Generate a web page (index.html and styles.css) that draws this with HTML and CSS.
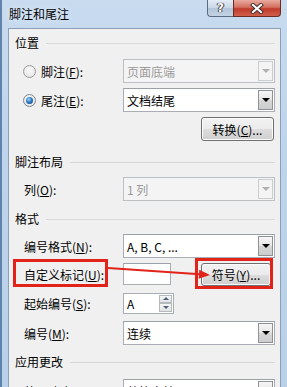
FILE: index.html
```html
<!DOCTYPE html>
<html lang="zh-CN">
<head>
<meta charset="UTF-8">
<title>脚注和尾注</title>
<link rel="stylesheet" href="styles.css">
</head>
<body>
<div class="window">
  <div class="titlebar">
    <span class="title">脚注和尾注</span>
    <div class="caption">
      <span class="cap-btn help">?</span>
      <span class="cap-btn close">
        <svg width="14" height="11" viewBox="0 0 14 11">
          <path d="M3 2 L11 9 M11 2 L3 9" stroke="#3a2a2a" stroke-width="4" stroke-linecap="square"/>
          <path d="M3 2 L11 9 M11 2 L3 9" stroke="#fff" stroke-width="2.2" stroke-linecap="square"/>
        </svg>
      </span>
    </div>
  </div>

  <div class="client">
    <div class="group-head">位置</div>

    <div class="row r-foot">
      <label class="lbl radio-lbl"><span class="radio"></span><span>脚注(<u>F</u>):</span></label>
      <div class="combo disabled"><span class="combo-text">页面底端</span><span class="drop"></span></div>
    </div>
    <div class="row r-end">
      <label class="lbl radio-lbl"><span class="radio checked"></span><span>尾注(<u>E</u>):</span></label>
      <div class="combo"><span class="combo-text">文档结尾</span><span class="drop"></span></div>
    </div>
    <div class="row r-convert">
      <button class="btn btn-convert">转换(<u>C</u>)...</button>
    </div>

    <div class="group-head gh-layout">脚注布局</div>
    <div class="row r-cols">
      <label class="lbl">列(<u>O</u>):</label>
      <div class="combo disabled"><span class="combo-text">1 列</span><span class="drop"></span></div>
    </div>

    <div class="group-head gh-format">格式</div>
    <div class="row r-numfmt">
      <label class="lbl">编号格式(<u>N</u>):</label>
      <div class="combo"><span class="combo-text">A, B, C, ...</span><span class="drop"></span></div>
    </div>
    <div class="row r-custom">
      <label class="lbl">自定义标记(<u>U</u>):</label>
      <div class="textbox"></div>
      <button class="btn btn-symbol">符号(<u>Y</u>)...</button>
    </div>
    <div class="row r-start">
      <label class="lbl">起始编号(<u>S</u>):</label>
      <div class="spin">
        <span class="spin-text">A</span>
        <span class="spin-btns"><span class="spin-up"></span><span class="spin-down"></span></span>
      </div>
    </div>
    <div class="row r-numbering">
      <label class="lbl">编号(<u>M</u>):</label>
      <div class="combo"><span class="combo-text">连续</span><span class="drop"></span></div>
    </div>

    <div class="group-head gh-apply">应用更改</div>
    <div class="row r-apply">
      <label class="lbl">将更改应用于(<u>P</u>):</label>
      <div class="combo"><span class="combo-text">整篇文档</span><span class="drop"></span></div>
    </div>
  </div>

  <!-- 标注层：红框和箭头 -->
  <svg class="marks" width="287" height="387" viewBox="0 0 287 387">
    <rect x="14.5" y="260.5" width="92" height="25" fill="none" stroke="#e2231a" stroke-width="3"/>
    <rect x="196.5" y="259.5" width="75" height="28" fill="none" stroke="#e2231a" stroke-width="3"/>
    <line x1="108" y1="268" x2="200" y2="274.3" stroke="#e2231a" stroke-width="2"/>
    <polygon points="210,275 199.3,269.8 198.7,278.7" fill="#e2231a"/>
  </svg>
</div>
</body>
</html>
```

FILE: styles.css
```css
* {
  box-sizing: border-box;
}
body {
  margin: 0;
  font-family: "Noto Sans CJK SC", "Microsoft YaHei", sans-serif;
  font-size: 12px;
  color: #000;
}
u {
  text-decoration: underline;
  text-underline-offset: 1px;
}

.window {
  position: relative;
  width: 287px;
  height: 387px;
  overflow: hidden;
  background: linear-gradient(to bottom, #c8dbef 0%, #bed4ec 40%, #b8d0e9 100%);
  border-left: 2px solid #5f83aa;
}

/* titellinje */
.titlebar {
  height: 28px;
  display: flex;
  justify-content: space-between;
  align-items: flex-start;
  padding-left: 7px;
}
.title {
  line-height: 28px;
  text-shadow: 0 0 6px #eaf2fb;
}
.caption {
  display: flex;
  margin-right: 6px;
}
.cap-btn {
  height: 17px;
  display: flex;
  align-items: center;
  justify-content: center;
  border: 1px solid #5a6b82;
  border-top: none;
}
.help {
  width: 26px;
  border-right: none;
  border-bottom-left-radius: 4px;
  background: linear-gradient(to bottom, #e3ebf5 0%, #c9d6e6 50%, #b3c3d8 51%, #c4d3e4 100%);
  color: #fff;
  font-family: "DejaVu Sans", sans-serif;
  font-weight: bold;
  font-size: 12px;
  text-shadow: 0 0 1px #333, 0 0 1px #333, 1px 0 0 #4a4a4a, -1px 0 0 #4a4a4a;
}
.close {
  width: 48px;
  border-bottom-right-radius: 4px;
  border-color: #6b2a24;
  background: linear-gradient(to bottom, #e8aa9f 0%, #d4705f 45%, #c0392a 55%, #d0604c 100%);
}

/* klientområde */
.client {
  height: 359px;
  margin: 0 6px;
  padding: 6px 5px 0 6px;
  background: #f0f0f0;
  border: 1px solid #8d9fb6;
  border-bottom: none;
}
.group-head {
  display: flex;
  align-items: center;
  height: 16px;
  line-height: 16px;
}
.group-head::after {
  content: "";
  flex: 1;
  margin-left: 7px;
  border-top: 1px solid #d9d9d9;
}
.gh-layout { margin-top: 13px; }
.gh-format { margin-top: 10px; }
.gh-apply { margin-top: 9px; }

.row {
  display: flex;
  align-items: center;
  height: 24px;
}
.r-foot { margin-top: 8px; }
.r-end { margin-top: 5px; }
.r-convert { margin-top: 5px; justify-content: flex-end; }
.r-cols { margin-top: 7px; }
.r-numfmt { margin-top: 7px; }
.r-custom { margin-top: 4px; }
.r-start { margin-top: 6px; height: 22px; }
.r-numbering { margin-top: 7px; }
.r-apply { margin-top: 9px; }

.lbl {
  width: 108px;
  flex: none;
  padding-left: 9px;
  white-space: nowrap;
}
.radio-lbl {
  display: flex;
  align-items: center;
  padding-left: 8px;
  gap: 5px;
}

/* radioknapper */
.radio {
  width: 13px;
  height: 13px;
  border-radius: 50%;
  border: 1px solid #9a9a9a;
  background: radial-gradient(circle at 50% 40%, #fbfbfb 0%, #e8e8e8 70%, #d6d6d6 100%);
  display: flex;
  align-items: center;
  justify-content: center;
}
.radio.checked {
  border-color: #7c8590;
}
.radio.checked::after {
  content: "";
  width: 7px;
  height: 7px;
  border-radius: 50%;
  background: radial-gradient(circle at 40% 35%, #9fd6ff 0%, #2f7cc4 45%, #0c3a6a 100%);
}

/* kombinationsbokse */
.combo {
  flex: 1;
  height: 24px;
  display: flex;
  align-items: center;
  justify-content: space-between;
  background: #fff;
  border: 1px solid #a9aeb6;
  border-top-color: #9ba1a9;
  padding: 0 1px 0 3px;
}
.combo-text {
  white-space: nowrap;
}
.drop {
  width: 15px;
  height: 20px;
  display: flex;
  align-items: center;
  justify-content: center;
  border: 1px solid #8f9295;
  background: linear-gradient(to bottom, #f6f6f6 0%, #e6e6e6 50%, #d6d6d6 51%, #cdcdcd 100%);
}
.drop::after {
  content: "";
  border-left: 4px solid transparent;
  border-right: 4px solid transparent;
  border-top: 4px solid #000;
}
.combo.disabled {
  background: #f4f4f4;
  border-color: #bcc0c4;
  color: #9a9a9a;
}
.combo.disabled .drop {
  border-color: #cbcdcf;
  background: #f4f4f4;
}
.combo.disabled .drop::after {
  border-top-color: #b0b0b0;
}

/* knapper */
.btn {
  height: 24px;
  padding: 0;
  font-family: inherit;
  font-size: 12px;
  color: #000;
  border: 1px solid #707070;
  border-radius: 3px;
  background: linear-gradient(to bottom, #f2f2f2 0%, #ebebeb 50%, #dddddd 51%, #cfcfcf 100%);
  box-shadow: inset 0 0 0 1px #fbfbfb;
}
.btn-convert {
  width: 73px;
  margin-right: 1px;
}
.btn-symbol {
  width: 70px;
  height: 23px;
  margin-left: auto;
  margin-right: 4px;
}

.textbox {
  width: 48px;
  height: 22px;
  background: #fff;
  border: 1px solid #a9aeb6;
  border-top-color: #9ba1a9;
}

/* spinfelt */
.spin {
  width: 51px;
  height: 21px;
  display: flex;
  justify-content: space-between;
  background: #fff;
  border: 1px solid #a9aeb6;
  padding: 1px 1px 1px 3px;
}
.spin-text {
  line-height: 17px;
}
.spin-btns {
  display: flex;
  flex-direction: column;
  width: 13px;
}
.spin-up,
.spin-down {
  flex: 1;
  display: flex;
  align-items: center;
  justify-content: center;
  border: 1px solid #b5bac0;
  background: linear-gradient(to bottom, #f7f7f7, #e1e1e1);
}
.spin-up::after {
  content: "";
  border-left: 3px solid transparent;
  border-right: 3px solid transparent;
  border-bottom: 3px solid #4c607f;
}
.spin-down::after {
  content: "";
  border-left: 3px solid transparent;
  border-right: 3px solid transparent;
  border-top: 3px solid #4c607f;
}

/* markeringer over indholdet */
.marks {
  position: absolute;
  top: 0;
  left: -2px;
  pointer-events: none;
}
```
